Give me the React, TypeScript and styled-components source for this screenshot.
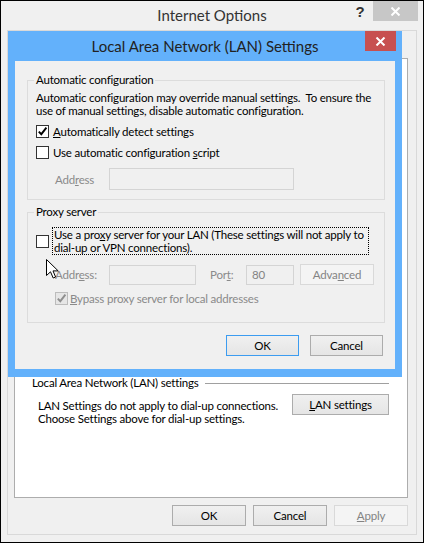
import React from 'react';
import styled, { createGlobalStyle, css } from 'styled-components';

const GlobalStyle = createGlobalStyle`
  html, body {
    margin: 0;
    padding: 0;
    background: #ffffff;
  }
  body {
    font-family: Lato, "Liberation Sans", sans-serif;
    font-size: 11.5px;
    letter-spacing: -0.2px;
    color: #000;
  }
  * {
    box-sizing: border-box;
  }
`;

// Whole screenshot area, windows sit on it
const Desktop = styled.div`
  position: relative;
  width: 424px;
  height: 543px;
  overflow: hidden;
`;

// ---------- Internet Options (background window) ----------

const Window = styled.div`
  width: 424px;
  height: 543px;
  border: 1px solid #000;
  background: #f0f0f0;
  display: flex;
  flex-direction: column;
`;

const TitleBar = styled.div<{ $height: number }>`
  height: ${p => p.$height}px;
  flex-shrink: 0;
  display: grid;
  grid-template-columns: 1fr auto 1fr;
  align-items: center;
`;

const TitleText = styled.div<{ $color?: string; $lift?: number }>`
  grid-column: 2;
  font-size: 15px;
  letter-spacing: 0;
  padding-bottom: ${p => p.$lift || 0}px;
  color: ${p => p.$color || '#333'};
`;

const CaptionGroup = styled.div<{ $right: number }>`
  grid-column: 3;
  align-self: start;
  justify-self: end;
  display: flex;
  margin-right: ${p => p.$right}px;
`;

const HelpButton = styled.div`
  width: 26px;
  height: 22px;
  line-height: 22px;
  text-align: center;
  font-family: "Liberation Sans", sans-serif;
  font-weight: bold;
  font-size: 15px;
  color: #333;
`;

const CloseButton = styled.div<{ $width: number; $bg: string }>`
  width: ${p => p.$width}px;
  height: 20px;
  background: ${p => p.$bg};
  display: flex;
  align-items: center;
  justify-content: center;
`;

const Frame = styled.div`
  flex: 1;
  margin: 0 6px 7px 6px;
  border: 1px solid #d9d9d9;
  padding: 27px 8px 8px 6px;
  display: flex;
  flex-direction: column;
`;

const TabPage = styled.div`
  flex: 1;
  background: #fff;
  border: 1px solid #adadad;
  padding: 317px 18px 0 17px;
`;

const SectionHeader = styled.div`
  display: flex;
  align-items: center;
  height: 14px;
  line-height: 14px;
`;

const SectionRule = styled.div`
  flex: 1;
  height: 1px;
  margin-left: 7px;
  background: #a0a0a0;
`;

const SectionBody = styled.div`
  display: flex;
  justify-content: space-between;
  align-items: flex-start;
  margin-top: 4px;
`;

const SectionText = styled.div`
  margin: 5px 0 0 6px;
  line-height: 13px;
`;

const ButtonRow = styled.div<{ $gap: number; $top: number; $right?: number }>`
  display: flex;
  justify-content: flex-end;
  gap: ${p => p.$gap}px;
  margin-top: ${p => p.$top}px;
  margin-right: ${p => p.$right || 0}px;
`;

const Button = styled.div<{ $width: number; $disabled?: boolean; $default?: boolean }>`
  width: ${p => p.$width}px;
  height: 21px;
  flex-shrink: 0;
  display: flex;
  align-items: center;
  justify-content: center;
  border: 1px solid #acacac;
  background: linear-gradient(#f0f0f0, #e5e5e5);
  ${p =>
    p.$default &&
    css`
      border-color: #3c9cf0;
    `}
  ${p =>
    p.$disabled &&
    css`
      border-color: #d9d9d9;
      background: #f4f4f4;
      color: #838383;
    `}
`;

const Key = styled.span`
  text-decoration: underline;
  text-underline-offset: 1px;
`;

// ---------- LAN Settings dialog (on top) ----------

const Dialog = styled.div`
  position: absolute;
  left: 8px;
  top: 31px;
  width: 394px;
  height: 346px;
  background: #63b1fb;
  display: flex;
  flex-direction: column;
`;

const Client = styled.div`
  flex: 1;
  margin: 0 7px 8px 7px;
  background: #f0f0f0;
  padding: 12px 10px 0 12px;
  display: flex;
  flex-direction: column;
`;

const Group = styled.fieldset<{ $top?: number; $bottom: number }>`
  margin: ${p => p.$top || 0}px 0 0 0;
  padding: 4px 8px ${p => p.$bottom}px 8px;
  border: 1px solid #dcdcdc;
  min-width: 0;
`;

const Legend = styled.legend`
  padding: 0 2px;
  margin-left: -2px;
  height: 14px;
  line-height: 14px;
`;

const Para = styled.div`
  line-height: 13px;
  white-space: pre;
`;

const Row = styled.div<{ $top: number; $indent?: number }>`
  display: flex;
  align-items: center;
  min-height: 16px;
  margin-top: ${p => p.$top}px;
  margin-left: ${p => p.$indent || 0}px;
`;

const Box = styled.div<{ $disabled?: boolean }>`
  width: 13px;
  height: 13px;
  flex-shrink: 0;
  border: 1px solid ${p => (p.$disabled ? '#bcbcbc' : '#333')};
  background: ${p => (p.$disabled ? '#e6e6e6' : '#fff')};
  display: flex;
  align-items: center;
  justify-content: center;
`;

const BoxLabel = styled.span<{ $gap: number; $disabled?: boolean }>`
  margin-left: ${p => p.$gap}px;
  color: ${p => (p.$disabled ? '#8a8a8a' : '#000')};
`;

const FocusLabel = styled.div`
  margin-left: 3px;
  width: 317px;
  border: 1px dotted #000;
  padding: 0 1px;
  line-height: 13px;
  white-space: nowrap;
`;

const FieldRow = styled.div<{ $top: number }>`
  display: flex;
  align-items: center;
  margin-top: ${p => p.$top}px;
`;

const FieldLabel = styled.span<{ $width: number; $indent?: number }>`
  width: ${p => p.$width}px;
  margin-left: ${p => p.$indent || 0}px;
  color: #8a8a8a;
  flex-shrink: 0;
`;

const TextBox = styled.div<{ $width: number; $height: number }>`
  width: ${p => p.$width}px;
  height: ${p => p.$height}px;
  border: 1px solid #d4d4d4;
  background: #f0f0f0;
  color: #838383;
  padding-left: 5px;
  display: flex;
  align-items: center;
  flex-shrink: 0;
`;

const SideButton = styled(Button)`
  margin-left: 6px;
`;

const Pointer = styled.svg`
  position: absolute;
  left: 46px;
  top: 259px;
`;

const CrossIcon: React.FC = () => (
  <svg width="11" height="9" viewBox="0 0 11 9">
    <path d="M1.5 0.5 L9.5 8.5 M9.5 0.5 L1.5 8.5" stroke="#fff" strokeWidth="2" />
  </svg>
);

const Checkbox: React.FC<{ checked?: boolean; disabled?: boolean }> = ({ checked, disabled }) => (
  <Box $disabled={disabled}>
    {checked && (
      <svg width="11" height="11" viewBox="0 0 11 11">
        <path
          d="M1.8 5.6 L4.3 8.2 L9.4 1.6"
          fill="none"
          stroke={disabled ? '#8f8f8f' : '#000'}
          strokeWidth="1.9"
        />
      </svg>
    )}
  </Box>
);

const LanDialog: React.FC = () => (
  <Dialog>
    <TitleBar $height={30}>
      <TitleText $color="#222" $lift={1}>
        Local Area Network (LAN) Settings
      </TitleText>
      <CaptionGroup $right={6}>
        <CloseButton $width={31} $bg="#c75050">
          <CrossIcon />
        </CloseButton>
      </CaptionGroup>
    </TitleBar>
    <Client>
      <Group $bottom={9}>
        <Legend>Automatic configuration</Legend>
        <Para>
          {'Automatic configuration may override manual settings.  To ensure the\nuse of manual settings, disable automatic configuration.'}
        </Para>
        <Row $top={6}>
          <Checkbox checked />
          <BoxLabel $gap={4}>
            <Key>A</Key>utomatically detect settings
          </BoxLabel>
        </Row>
        <Row $top={5}>
          <Checkbox />
          <BoxLabel $gap={4}>
            Use automatic configuration <Key>s</Key>cript
          </BoxLabel>
        </Row>
        <FieldRow $top={8}>
          <FieldLabel $width={54} $indent={19}>
            Add<Key>r</Key>ess
          </FieldLabel>
          <TextBox $width={185} $height={22} />
        </FieldRow>
      </Group>

      <Group $top={5} $bottom={16}>
        <Legend>Proxy server</Legend>
        <Row $top={4}>
          <Checkbox />
          <FocusLabel>
            Use a pro<Key>x</Key>y server for your LAN (These settings will not apply to
            <br />
            dial-up or VPN connections).
          </FocusLabel>
        </Row>
        <FieldRow $top={9}>
          <FieldLabel $width={54} $indent={19}>
            Addr<Key>e</Key>ss:
          </FieldLabel>
          <TextBox $width={87} $height={20} />
          <FieldLabel $width={36} $indent={14}>
            Por<Key>t</Key>:
          </FieldLabel>
          <TextBox $width={48} $height={20}>
            80
          </TextBox>
          <SideButton $width={74} $disabled>
            Adva<Key>n</Key>ced
          </SideButton>
        </FieldRow>
        <Row $top={5} $indent={19}>
          <Checkbox checked disabled />
          <BoxLabel $gap={2} $disabled>
            <Key>B</Key>ypass proxy server for local addresses
          </BoxLabel>
        </Row>
      </Group>

      <ButtonRow $gap={11} $top={12} $right={2}>
        <Button $width={73} $default>
          OK
        </Button>
        <Button $width={73}>Cancel</Button>
      </ButtonRow>
    </Client>
  </Dialog>
);

const App: React.FC = () => (
  <>
    <GlobalStyle />
    <Desktop>
      <Window>
        <TitleBar $height={29}>
          <TitleText $lift={2}>Internet Options</TitleText>
          <CaptionGroup $right={5}>
            <HelpButton>?</HelpButton>
            <CloseButton $width={45} $bg="#c7c7c7">
              <CrossIcon />
            </CloseButton>
          </CaptionGroup>
        </TitleBar>
        <Frame>
          <TabPage>
            <SectionHeader>
              Local Area Network (LAN) settings
              <SectionRule />
            </SectionHeader>
            <SectionBody>
              <SectionText>
                LAN Settings do not apply to dial-up connections.
                <br />
                Choose Settings above for dial-up settings.
              </SectionText>
              <Button $width={97}>
                <Key>L</Key>AN settings
              </Button>
            </SectionBody>
          </TabPage>
          <ButtonRow $gap={7} $top={7}>
            <Button $width={74}>OK</Button>
            <Button $width={74}>Cancel</Button>
            <Button $width={74} $disabled>
              <Key>A</Key>pply
            </Button>
          </ButtonRow>
        </Frame>
      </Window>

      <LanDialog />

      <Pointer width="14" height="21" viewBox="0 0 14 21">
        <path
          d="M0.5 0.5 L0.5 16.5 L4.5 12.8 L7.2 19 L9.6 18 L7 11.9 L12.2 11.9 Z"
          fill="#fff"
          stroke="#000"
          strokeWidth="1"
          strokeLinejoin="miter"
        />
      </Pointer>
    </Desktop>
  </>
);

export default App;
